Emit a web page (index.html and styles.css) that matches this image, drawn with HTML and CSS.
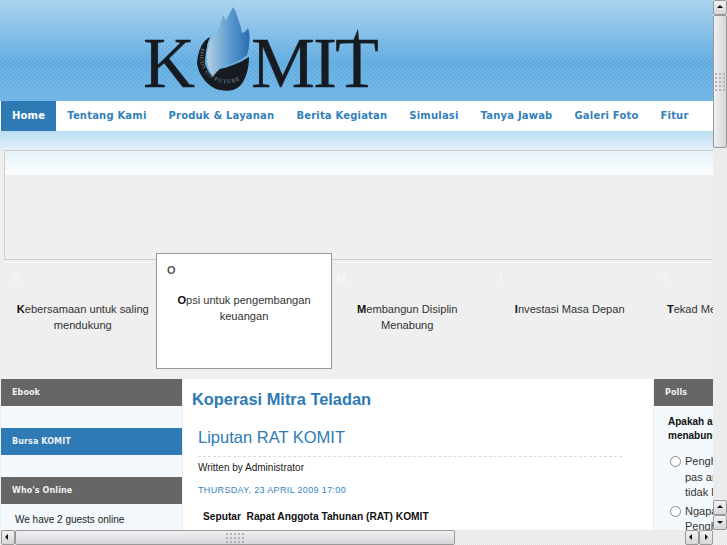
FILE: index.html
```html
<!DOCTYPE html>
<html>
  <head>
    <meta charset="utf-8">
    <title>Komit</title>
    <link rel="stylesheet" href="styles.css">
  </head>
  <body>
    <div class="page">
      <header class="header">
        <div class="logo">
          <span class="logo-k">K</span>
          <svg class="flame" width="54" height="86" viewBox="0 0 54 86">
            <defs>
              <linearGradient id="fl" x1="0" y1="0" x2="1" y2="0">
                <stop offset="0" stop-color="#b3d0e2"/>
                <stop offset="0.5" stop-color="#5f9dd2"/>
                <stop offset="1" stop-color="#2a6cb0"/>
              </linearGradient>
              <path id="ring" d="M4 42 A27 27 0 0 0 50 68"/>
            </defs>
            <path d="M36 1 C39 5 40 9 41 13 C43 18 44 22 45 27 C48 26 50 24 51 22 C53 28 53 33 52 38 C52 42 51 46 50 49 C45 53 41 55 36 57 C30 59 26 60 23 62 C20 64 18 67 16 70 C13 66 10 60 10 52 C10 44 12 36 16 31 C20 25 23 22 23 19 C24 16 25 12 26 9 C27 11 28 13 29 15 C31 10 34 5 36 1 Z" fill="url(#fl)"/>
            <path d="M13 31 C5 35 1 45 0 57 C1 64 3 68 6 72 C11 79 17 83 23 84 C28 85 32 85 36 84 C42 82 46 77 48 72 C51 65 52 58 52 51 C47 54 42 57 36 59 C31 61 27 62 23 63 C20 65 18 68 16 71 C12 67 9 62 8 57 C8 50 9 45 10 41 C10 37 12 34 13 31 Z" fill="#161b21"/>
            <text class="ring-text" fill="#8f9ba6"><textPath href="#ring">FOCUS ON FUTURE</textPath></text>
          </svg>
          <span class="logo-mit">MIT</span>
          <svg class="t-spike" width="6" height="12" viewBox="0 0 6 12">
            <path d="M0 12 L5 0 L6 12 Z" fill="#161b21"/>
          </svg>
        </div>
      </header>

      <nav class="nav">
        <a class="active">Home</a>
        <a>Tentang Kami</a>
        <a>Produk &amp; Layanan</a>
        <a>Berita Kegiatan</a>
        <a>Simulasi</a>
        <a>Tanya Jawab</a>
        <a>Galeri Foto</a>
        <a>Fitur</a>
      </nav>

      <div class="banner-wrap">
        <div class="banner"></div>
      </div>

      <div class="features">
        <div class="feature">
          <div class="letter">K</div>
          <p><b>K</b>ebersamaan untuk saling mendukung</p>
        </div>
        <div class="feature current">
          <div class="letter">O</div>
          <p><b>O</b>psi untuk pengembangan keuangan</p>
        </div>
        <div class="feature">
          <div class="letter">M</div>
          <p><b>M</b>embangun Disiplin Menabung</p>
        </div>
        <div class="feature">
          <div class="letter">I</div>
          <p><b>I</b>nvestasi Masa Depan</p>
        </div>
        <div class="feature">
          <div class="letter">T</div>
          <p><b>T</b>ekad Menuju Hidup Kaya</p>
        </div>
      </div>

      <div class="columns">
        <aside class="left">
          <h3 class="mod-title">Ebook</h3>
          <div class="mod-gap"></div>
          <h3 class="mod-title blue">Bursa KOMIT</h3>
          <div class="mod-gap"></div>
          <h3 class="mod-title">Who's Online</h3>
          <p class="online">We have 2 guests online</p>
        </aside>

        <main class="main">
          <h1>Koperasi Mitra Teladan</h1>
          <div class="article">
            <h2>Liputan RAT KOMIT</h2>
            <p class="author">Written by Administrator</p>
            <p class="date">Thursday, 23 April 2009 17:00</p>
            <p class="lead">Seputar&nbsp; Rapat Anggota Tahunan (RAT) KOMIT</p>
          </div>
        </main>

        <aside class="right">
          <h3 class="mod-title">Polls</h3>
          <div class="poll">
            <p class="question">Apakah anda<br>menabung</p>
            <label class="choice"><span class="radio"></span><span>Penghasilan<br>pas anda<br>tidak lebih</span></label>
            <label class="choice"><span class="radio"></span><span>Ngapain<br>Penghasilan</span></label>
          </div>
        </aside>
      </div>
    </div>

    <div class="vbar">
      <div class="sb-btn up"></div>
      <div class="vthumb"><span class="grip grip-v"></span></div>
      <div class="sb-fill"></div>
      <div class="sb-btn up"></div>
      <div class="sb-btn down"></div>
    </div>
    <div class="hbar">
      <div class="sb-btn left-btn"></div>
      <div class="hthumb"><span class="grip grip-h"></span></div>
      <div class="sb-fill"></div>
      <div class="sb-btn left-btn"></div>
      <div class="sb-btn right-btn"></div>
    </div>
  </body>
</html>
```
FILE: styles.css
```css
html, body {
  margin: 0;
  height: 100%;
  overflow: hidden;
}

body {
  background: #efefef;
  font-family: "Liberation Sans", Arial, sans-serif;
  font-size: 10px;
  color: #222;
}

.page {
  width: 760px;
  height: 545px;
  overflow: hidden;
}

.header {
  height: 101px;
  background:
    repeating-conic-gradient(rgba(255, 255, 255, 0.07) 0 25%, transparent 0 50%) 0 0 / 4px 4px,
    linear-gradient(to bottom, #a8d2ef 0, #5fabe0 62%, #6fb5e6 100%);
  box-sizing: border-box;
  padding-left: 143px;
}

.logo {
  position: relative;
  display: flex;
  align-items: flex-start;
  font-family: "Liberation Serif", serif;
  font-size: 72px;
  line-height: 60px;
  color: #161b21;
  -webkit-text-stroke: 0.3px #161b21;
}

.logo-k {
  width: 54px;
  margin-top: 33px;
}

.logo-mit {
  margin-top: 33px;
  letter-spacing: -2px;
}

.flame {
  flex: none;
  margin-top: 6px;
}

.t-spike {
  position: absolute;
  left: 210px;
  top: 29px;
}

.ring-text {
  font-family: "Liberation Serif", serif;
  font-size: 5.5px;
  letter-spacing: 1px;
  -webkit-text-stroke: 0;
}

.nav {
  display: flex;
  height: 30px;
  background: #fff;
  padding-left: 1px;
  font-family: "DejaVu Sans", sans-serif;
  font-size: 10px;
  font-weight: bold;
  letter-spacing: 0.19px;
  line-height: 29px;
  color: #3380ba;
}

.nav a {
  padding: 0 11px;
}

.nav a.active {
  background: #2d7ab5;
  color: #fff;
}

.banner-wrap {
  height: 129px;
  padding: 19px 0 0 4px;
  box-sizing: border-box;
  background: linear-gradient(to bottom, #b9dcf2 0, #e4f0f9 19px, #efefef 19px);
}

.banner {
  height: 110px;
  box-sizing: border-box;
  border: 1px solid #cfcfcf;
  background: linear-gradient(to bottom, #e6f3fb 0, #fafdff 22px, #fff 23px, #efefef 24px);
}

.features {
  display: flex;
  height: 118px;
  margin-top: 1px;
  padding-left: 1.5px;
}

.feature {
  width: 162.5px;
  flex: none;
  box-sizing: border-box;
  padding: 11px 11px 0;
  text-align: center;
  font-size: 11.1px;
  line-height: 16px;
  color: #333;
}

.feature p {
  margin: 17px 0 0;
}

.feature b {
  color: #111;
}

.letter {
  text-align: left;
  font-weight: bold;
  font-size: 11px;
  line-height: 12px;
  color: #f6f6f6;
}

.feature.current {
  position: relative;
  width: 176px;
  height: 116px;
  margin: -8px -6px 0 -8px;
  padding: 10px 10px 0;
  background: #fff;
  border: 1px solid #999;
}

.feature.current p {
  margin-top: 16px;
}

.feature.current .letter {
  color: #555;
}

.columns {
  display: flex;
  padding-left: 1px;
  height: 166px;
}

.left {
  width: 181px;
  background: #f3f9fc;
  flex: none;
}

.mod-title {
  margin: 0;
  height: 27px;
  padding-left: 11px;
  background: #666;
  color: #f0f0f0;
  font-family: "DejaVu Sans", sans-serif;
  font-size: 8px;
  font-weight: bold;
  letter-spacing: 0.1px;
  line-height: 28px;
}

.mod-title.blue {
  background: #2d7ab5;
}

.mod-gap {
  height: 22px;
}

.online {
  margin: 0;
  padding: 9px 14px;
  line-height: 14px;
}

.main {
  width: 470px;
  margin-left: 1px;
  background: #fff;
  flex: none;
  box-sizing: border-box;
  padding: 11px 0 0 9px;
}

.main h1 {
  margin: 0;
  font-size: 16.4px;
  line-height: 19px;
  color: #2d7ab5;
}

.article {
  width: 424px;
  padding: 18px 0 0 6px;
}

.article h2 {
  margin: 0;
  padding-bottom: 9px;
  border-bottom: 1px dashed #ddd;
  font-size: 16.5px;
  font-weight: normal;
  line-height: 20px;
  color: #2d7ab5;
}

.author {
  margin: 4px 0 0;
  font-size: 10px;
  line-height: 13px;
}

.date {
  margin: 10px 0 0;
  font-size: 9px;
  line-height: 12px;
  letter-spacing: 0.35px;
  text-transform: uppercase;
  color: #3583be;
}

.lead {
  margin: 14px 0 0 5px;
  font-size: 10.2px;
  font-weight: bold;
  line-height: 14px;
  color: #111;
}

.right {
  width: 110px;
  margin-left: 1px;
  background: #f3f9fc;
  flex: none;
}

.poll {
  padding: 9px 0 0 14px;
}

.question {
  margin: 0 0 11px;
  font-weight: bold;
  line-height: 14px;
  color: #111;
}

.choice {
  display: flex;
  gap: 4px;
  margin-bottom: 3px;
  padding-left: 2px;
  font-size: 11px;
  line-height: 15.5px;
  color: #333;
}

.radio {
  flex: none;
  width: 9px;
  height: 9px;
  margin-top: 2px;
  border: 1px solid #888;
  border-radius: 50%;
  background: #fff;
}

/* browser scrollbars sit on top of the page */
.vbar, .hbar {
  position: fixed;
  display: flex;
  background:
    repeating-conic-gradient(#e4e4e4 0 25%, #f4f4f4 0 50%) 0 0 / 2px 2px;
}

.vbar {
  top: 0;
  right: 0;
  width: 14px;
  height: 530px;
  flex-direction: column;
}

.hbar {
  left: 0;
  bottom: 0;
  width: 100%;
  height: 15px;
  box-sizing: border-box;
  padding-left: 1px;
  padding-right: 14px;
}

.sb-fill {
  flex: 1;
}

.sb-btn {
  width: 14px;
  height: 15px;
  flex: none;
  box-sizing: border-box;
  border: 1px solid #999;
  border-radius: 2px;
  background: linear-gradient(to bottom, #f2f2f4, #d6d6da);
  position: relative;
}

.sb-btn::after {
  content: "";
  position: absolute;
  left: 3px;
  top: 4px;
  border: 3px solid transparent;
}

.up::after { border-bottom-color: #111; top: 1px; }
.down::after { border-top-color: #111; top: 5px; }
.left-btn::after { border-right-color: #111; left: 0; top: 3px; }
.right-btn::after { border-left-color: #111; left: 5px; top: 3px; }

.vthumb {
  height: 133px;
  box-sizing: border-box;
  border: 1px solid #999;
  border-radius: 2px;
  background: linear-gradient(to right, #f0f0f3, #d6d6da);
  display: flex;
  align-items: center;
  justify-content: center;
}

.hthumb {
  width: 440px;
  flex: none;
  box-sizing: border-box;
  border: 1px solid #999;
  border-radius: 2px;
  background: linear-gradient(to bottom, #f0f0f3, #d6d6da);
  display: flex;
  align-items: center;
  justify-content: center;
}

.grip {
  background-image: linear-gradient(#b4b4b8 2px, transparent 2px);
  background-size: 4px 4px;
  -webkit-mask-image: linear-gradient(to right, #000 2px, transparent 2px);
  -webkit-mask-size: 4px 4px;
  mask-image: linear-gradient(to right, #000 2px, transparent 2px);
  mask-size: 4px 4px;
}

.grip-h {
  width: 18px;
  height: 10px;
}

.grip-v {
  width: 10px;
  height: 18px;
}
```
